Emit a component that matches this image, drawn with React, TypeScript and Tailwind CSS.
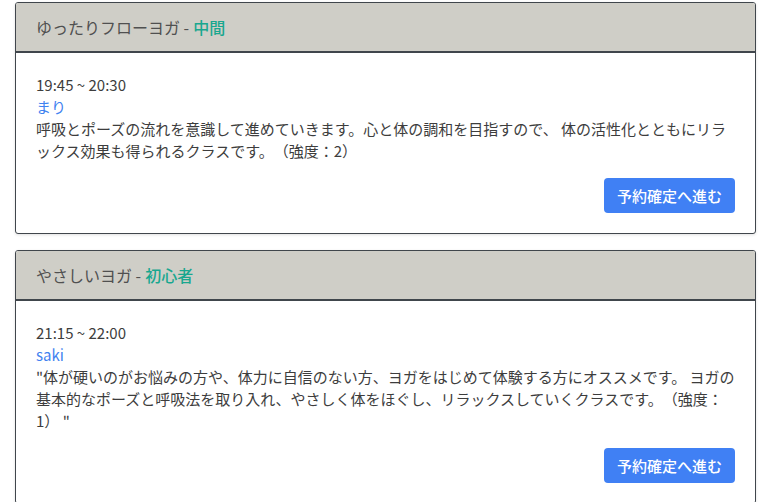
import React from "react";

interface Lesson {
  title: string;
  level: string;
  time: string;
  instructor: string;
  description: string;
}

const lessons: Lesson[] = [
  {
    title: "ゆったりフローヨガ",
    level: "中間",
    time: "19:45 ~ 20:30",
    instructor: "まり",
    description:
      "呼吸とポーズの流れを意識して進めていきます。心と体の調和を目指すので、 体の活性化とともにリラックス効果も得られるクラスです。（強度：2）",
  },
  {
    title: "やさしいヨガ",
    level: "初心者",
    time: "21:15 ~ 22:00",
    instructor: "saki",
    description:
      "\"体が硬いのがお悩みの方や、体力に自信のない方、ヨガをはじめて体験する方にオススメです。 ヨガの基本的なポーズと呼吸法を取り入れ、やさしく体をほぐし、リラックスしていくクラスです。（強度：1） \"",
  },
];

const LessonCard = ({ lesson }: { lesson: Lesson }) => (
  <div className="rounded-[3px] border border-[#40464c] bg-white shadow-[0_1px_3px_rgba(0,0,0,0.12)] overflow-hidden">
    <div className="h-[50px] bg-[#cfcec7] border-b-2 border-[#40464c] flex items-center px-5 text-[16px] text-[#505050]">
      <span>{lesson.title} - </span>
      <span className="ml-1 font-medium text-[#19a78f]">{lesson.level}</span>
    </div>
    <div className="px-5 pt-[21px] pb-[20px] text-[15px] leading-[22px] text-[#3d3d3d] [text-spacing-trim:space-all]">
      <div>{lesson.time}</div>
      <div className="text-[#3f82f0]">{lesson.instructor}</div>
      <p>{lesson.description}</p>
      <div className="flex justify-end mt-[16px]">
        <button className="h-[35px] px-[13px] rounded-[4px] bg-[#4080f4] text-white text-[15px] font-medium">
          予約確定へ進む
        </button>
      </div>
    </div>
  </div>
);

export default function App() {
  return (
    <div
      className="bg-white min-h-screen pl-[15px] pr-[14px] pt-[2px] flex flex-col gap-[16px]"
      style={{ fontFamily: '"Noto Sans CJK JP", "Noto Sans", sans-serif' }}
    >
      {lessons.map((l) => (
        <LessonCard key={l.time} lesson={l} />
      ))}
    </div>
  );
}
